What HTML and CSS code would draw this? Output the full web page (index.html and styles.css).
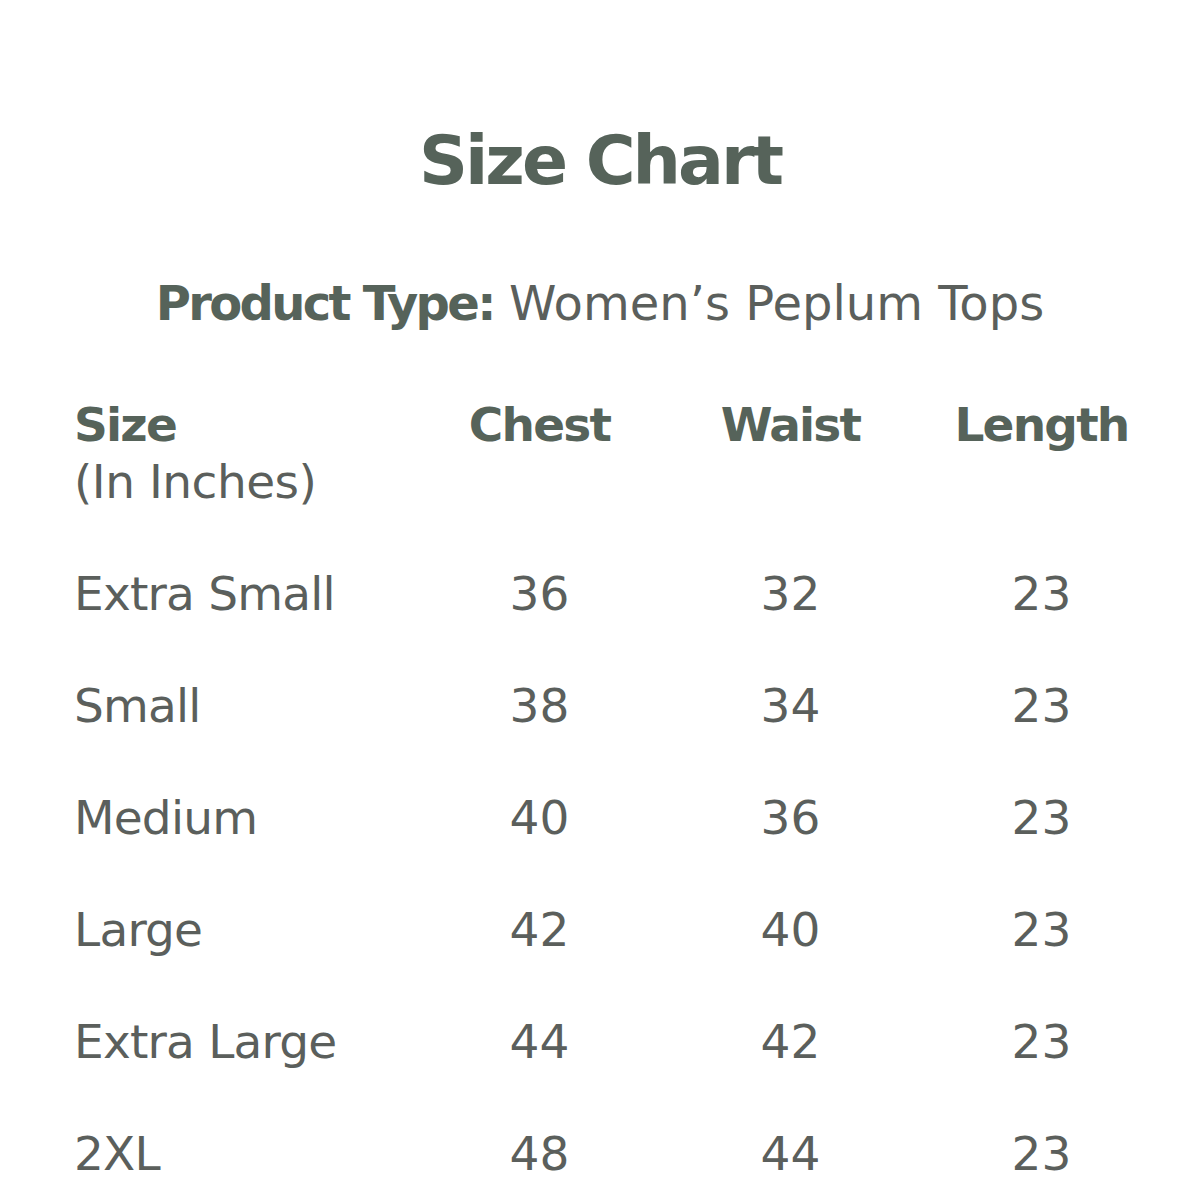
FILE: index.html
```html
<!DOCTYPE html>
<html>
<head>
<meta charset="utf-8">
<link rel="stylesheet" href="styles.css">
</head>
<body>
<main class="page">
  <h1 class="title">Size Chart</h1>
  <p class="product"><strong>Product Type:</strong> Women’s Peplum Tops</p>
  <div class="chart">
    <div class="head first"><strong>Size</strong><br><span class="unit">(In Inches)</span></div>
    <div class="head"><strong>Chest</strong></div>
    <div class="head"><strong>Waist</strong></div>
    <div class="head"><strong>Length</strong></div>

    <div class="cell first">Extra Small</div><div class="cell">36</div><div class="cell">32</div><div class="cell">23</div>
    <div class="cell first">Small</div><div class="cell">38</div><div class="cell">34</div><div class="cell">23</div>
    <div class="cell first">Medium</div><div class="cell">40</div><div class="cell">36</div><div class="cell">23</div>
    <div class="cell first">Large</div><div class="cell">42</div><div class="cell">40</div><div class="cell">23</div>
    <div class="cell first">Extra Large</div><div class="cell">44</div><div class="cell">42</div><div class="cell">23</div>
    <div class="cell first">2XL</div><div class="cell">48</div><div class="cell">44</div><div class="cell">23</div>
  </div>
</main>
</body>
</html>
```
FILE: styles.css
```css
html, body {
  margin: 0;
  padding: 0;
  background: #ffffff;
}
body {
  font-family: "DejaVu Sans", "Liberation Sans", sans-serif;
  color: #5b5f5c;
}
.page {
  width: 1200px;
  height: 1200px;
  overflow: hidden;
  padding-top: 121px;
  box-sizing: border-box;
}
.title {
  margin: 0;
  text-align: center;
  font-size: 68px;
  line-height: 80px;
  font-weight: 700;
  letter-spacing: -3px;
  color: #56635a;
}
.product {
  margin: 74px 0 0;
  text-align: center;
  font-size: 48px;
  line-height: 56px;
  font-weight: 400;
}
.product strong {
  color: #56635a;
  font-weight: 700;
  letter-spacing: -2.7px;
}
.chart {
  margin: 65px 0 0 74px;
  display: grid;
  grid-template-columns: 340px 251px 251px 251px;
  font-size: 47px;
}
.head {
  line-height: 57px;
  text-align: center;
  margin-bottom: 28px;
}
.head strong {
  color: #56635a;
  font-weight: 700;
  letter-spacing: -1.8px;
}
.unit {
  letter-spacing: -0.5px;
}
.cell {
  line-height: 112px;
  text-align: center;
}
.first {
  text-align: left;
}
.cell.first {
  letter-spacing: -0.8px;
}
```
